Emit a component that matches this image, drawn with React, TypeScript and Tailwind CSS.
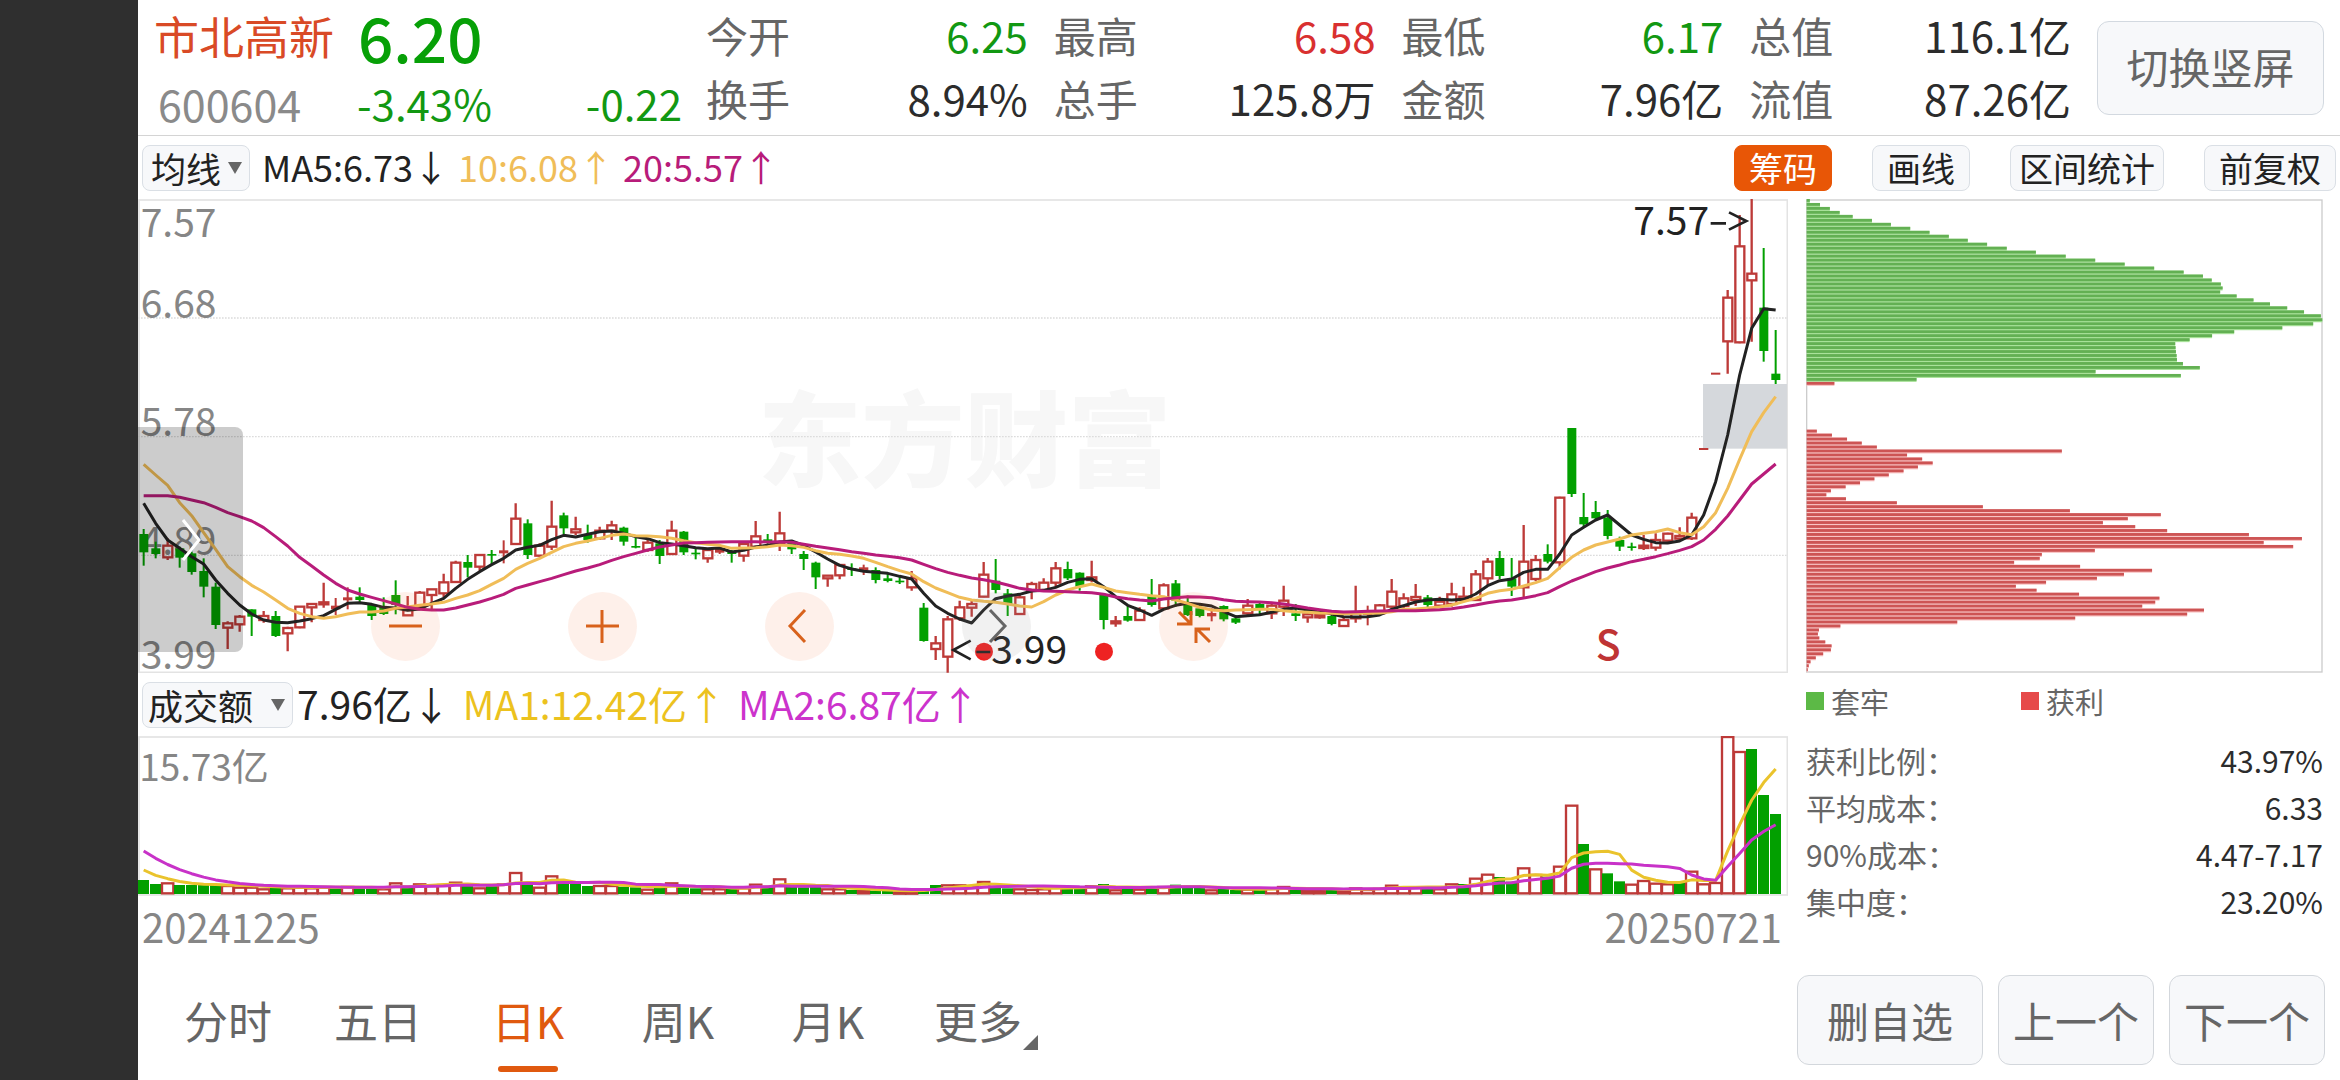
import React from 'react';
import { clsx } from 'clsx';

type Candle = [color: 'r' | 'g', high: number, top: number, bottom: number, low: number];

const STEP = 36;
const FIRST_X = 17;
const PLOT_W = 4950;
const PLOT_H = 1422;
const VOLUME_H = 480;

const UP = '#bd3a38';
const DOWN = '#02a000';

const shift = (base: number, values: number[]) => values.map((v) => v + base);
const shiftCandles = (base: number, rows: Candle[]) =>
  rows.map(([c, h, t, b, l]) => [c, h + base, t + base, b + base, l + base] as Candle);

// Candles are stored per block, each block relative to its own base line
const candles: Candle[] = [
  ...shiftCandles(603, [
    ['g', 387, 402, 457, 497], ['g', 425, 445, 462, 475], ['r', 415, 437, 472, 480], ['g', 440, 445, 473, 503],
    ['g', 455, 460, 516, 524], ['g', 475, 513, 560, 592], ['g', 548, 560, 675, 687], ['r', 664, 670, 683, 747],
    ['r', 645, 650, 673, 695], ['g', 628, 628, 650, 708], ['r', 633, 648, 660, 668], ['g', 633, 648, 708, 711],
    ['r', 680, 684, 700, 754], ['r', 618, 620, 682, 685], ['r', 610, 612, 622, 667], ['r', 548, 607, 613, 623],
    ['r', 594, 620, 625, 645], ['r', 562, 595, 598, 628], ['g', 562, 590, 600, 612], ['g', 612, 615, 648, 660],
    ['g', 592, 620, 642, 645], ['g', 541, 585, 615, 643], ['r', 588, 630, 646, 648], ['r', 573, 578, 620, 625],
    ['r', 567, 568, 585, 628], ['r', 521, 547, 580, 592], ['r', 482, 488, 546, 549], ['g', 465, 486, 503, 532],
    ['r', 463, 465, 500, 512], ['g', 450, 462, 466, 492], ['r', 421, 454, 457, 490], ['r', 310, 356, 432, 434],
    ['g', 358, 370, 465, 477], ['r', 430, 437, 467, 470], ['r', 302, 380, 440, 450], ['g', 338, 346, 385, 402],
    ['r', 350, 388, 397, 405], ['g', 374, 405, 420, 428], ['r', 380, 392, 415, 420], ['r', 362, 376, 392, 420],
    ['g', 380, 383, 425, 437], ['g', 405, 438, 440, 445], ['r', 420, 428, 450, 455], ['g', 420, 430, 468, 492],
    ['r', 362, 392, 462, 465], ['g', 393, 395, 457, 465],
  ]),
  ...shiftCandles(483, [
    ['g', 562, 578, 582, 598], ['r', 565, 570, 595, 608], ['r', 560, 570, 575, 582], ['g', 570, 575, 582, 608],
    ['r', 545, 552, 587, 605], ['r', 483, 529, 560, 562], ['g', 522, 538, 545, 552], ['r', 455, 520, 550, 573],
    ['g', 540, 543, 568, 582], ['g', 573, 582, 597, 630], ['g', 605, 608, 652, 687], ['r', 645, 647, 655, 680],
    ['r', 612, 615, 646, 658], ['g', 610, 625, 630, 648], ['r', 614, 625, 628, 645], ['g', 622, 630, 660, 670],
    ['g', 642, 655, 663, 667], ['g', 650, 662, 666, 672], ['r', 633, 655, 682, 692], ['g', 729, 743, 843, 845],
    ['r', 828, 850, 867, 900], ['r', 768, 778, 890, 938], ['r', 722, 742, 775, 782], ['r', 722, 732, 743, 770],
    ['r', 606, 644, 710, 712], ['g', 597, 662, 690, 700], ['g', 687, 700, 732, 768], ['r', 700, 712, 762, 765],
    ['r', 665, 672, 690, 718], ['r', 655, 668, 690, 693], ['r', 606, 625, 668, 680], ['g', 605, 627, 655, 660],
    ['g', 637, 638, 680, 692], ['r', 602, 652, 660, 667], ['g', 700, 705, 780, 808], ['r', 768, 784, 790, 800],
    ['g', 738, 768, 782, 785], ['r', 742, 752, 780, 783], ['g', 657, 707, 735, 740], ['r', 670, 676, 745, 750],
    ['g', 660, 670, 722, 740], ['g', 707, 733, 765, 768], ['g', 735, 745, 768, 772], ['r', 745, 762, 766, 784],
    ['g', 736, 738, 778, 784], ['g', 765, 775, 788, 792],
  ]),
  ...shiftCandles(603, [
    ['r', 597, 617, 640, 645], ['g', 608, 612, 628, 645], ['r', 612, 617, 640, 657], ['r', 557, 602, 620, 648],
    ['g', 612, 640, 648, 663], ['r', 640, 643, 652, 668], ['r', 640, 645, 652, 656], ['g', 645, 648, 672, 676],
    ['r', 652, 660, 678, 680], ['r', 557, 640, 655, 668], ['r', 617, 637, 642, 676], ['r', 612, 616, 640, 645],
    ['r', 537, 575, 620, 630], ['r', 580, 595, 618, 628], ['r', 552, 591, 600, 618], ['g', 585, 592, 615, 622],
    ['r', 590, 605, 617, 620], ['r', 548, 583, 612, 620], ['r', 560, 590, 600, 605], ['r', 510, 523, 600, 603],
    ['r', 474, 485, 535, 555], ['g', 453, 474, 528, 537], ['g', 474, 535, 560, 588], ['r', 375, 485, 562, 592],
    ['r', 465, 480, 537, 543], ['g', 433, 462, 485, 490], ['r', 290, 293, 487, 508], ['g', 84, 84, 282, 291],
    ['g', 279, 351, 373, 380], ['g', 303, 336, 355, 360], ['g', 330, 353, 408, 418], ['g', 410, 420, 440, 453],
  ]),
  ...shiftCandles(-27, [
    ['g', 1058, 1069, 1071, 1082], ['r', 1035, 1067, 1074, 1080], ['r', 1030, 1050, 1073, 1082],
    ['r', 1028, 1031, 1052, 1055], ['r', 1012, 1038, 1046, 1050], ['r', 968, 983, 1045, 1050],
    ['r', 777, 777, 777, 777], ['r', 551, 551, 551, 551], ['r', 300, 323, 454, 551], ['r', 75, 169, 457, 460],
    ['r', 27, 251, 271, 455], ['g', 174, 353, 483, 515], ['g', 420, 551, 570, 582],
  ]),
];

const ma5 = [
  ...shift(603, [
    310, 370, 420, 445, 470, 492, 540, 580, 615, 642, 660, 667, 668, 663, 656, 647, 628, 610, 608, 613, 622, 624, 631,
    627, 610, 595, 565, 538, 515, 494, 475, 450, 442, 436, 419, 406, 411, 403, 395, 393, 400, 410, 416, 428, 432, 437,
  ]),
  ...shift(483, [
    563, 566, 564, 576, 571, 561, 556, 546, 543, 556, 576, 597, 616, 627, 634, 637, 640, 649, 657, 700, 738, 760, 777,
    789, 750, 716, 708, 703, 693, 691, 682, 667, 658, 656, 680, 710, 736, 750, 766, 748, 736, 730, 733, 738, 755, 770,
  ]),
  ...shift(603, [
    647, 644, 637, 628, 624, 630, 634, 642, 650, 651, 650, 645, 628, 617, 606, 600, 598, 600, 598, 582, 557, 542, 537,
    517, 508, 508, 462, 405, 382, 360, 345, 375,
  ]),
  ...shift(-27, [1035, 1048, 1058, 1059, 1053, 1035, 975, 875, 735, 555, 415, 356, 360]),
];

const ma10 = [
  ...shift(603, [
    193, 225, 256, 308, 347, 398, 448, 500, 530, 556, 576, 600, 625, 640, 650, 655, 650, 642, 636, 636, 633, 625, 621,
    616, 612, 607, 595, 585, 572, 553, 535, 508, 490, 475, 457, 440, 430, 423, 415, 406, 402, 407, 408, 410, 415, 422,
  ]),
  ...shift(483, [
    548, 553, 556, 565, 564, 563, 560, 555, 557, 562, 572, 580, 583, 588, 595, 607, 620, 632, 642, 665, 684, 698, 712,
    720, 724, 727, 732, 738, 741, 725, 705, 690, 680, 672, 682, 693, 698, 703, 707, 710, 720, 730, 742, 750, 752, 750,
  ]),
  ...shift(603, [
    629, 628, 628, 632, 635, 637, 639, 640, 641, 640, 640, 639, 635, 628, 627, 624, 621, 615, 605, 595, 580, 572, 568,
    558, 548, 535, 503, 472, 450, 435, 426, 417,
  ]),
  ...shift(-27, [1035, 1030, 1025, 1017, 1028, 1034, 1010, 968, 895, 808, 725, 668, 620]),
];

const ma20 = [
  ...shift(603, [
    287, 287, 287, 292, 300, 308, 322, 338, 350, 363, 383, 410, 438, 472, 498, 525, 550, 570, 582, 592, 602, 612, 622,
    628, 630, 630, 624, 615, 606, 595, 583, 565, 555, 545, 535, 524, 513, 504, 494, 481, 470, 460, 450, 441, 435, 429,
  ]),
  ...shift(483, [
    548, 547, 546, 545, 545, 545, 546, 545, 547, 553, 559, 564, 569, 575, 580, 585, 589, 593, 600, 613, 626, 637, 646,
    654, 659, 666, 675, 685, 690, 693, 694, 695, 697, 698, 703, 711, 716, 720, 723, 717, 713, 710, 711, 713, 719, 724,
  ]),
  ...shift(603, [
    605, 606, 608, 612, 618, 624, 629, 634, 636, 635, 634, 633, 632, 632, 632, 631, 629, 626, 621, 615, 608, 603, 600,
    594, 587, 578, 560, 543, 529, 515, 504, 495,
  ]),
  ...shift(-27, [1115, 1108, 1100, 1091, 1081, 1070, 1050, 1018, 978, 930, 882, 852, 822]),
];

// Negative = falling day
const volumes = [
  -42, -30, 35, -27, -27, -27, -27, 27, 22, 22, 17, -20, 20, 22, 20, 22, -17, 24, -20, -17, 17, 35, -20, 32, 27, 30, 37,
  -24, 20, -24, 32, 66, -29, 22, 56, -37, -32, -24, 27, 27, -22, -20, 16, -22, 35, -22, -17, 17, 17, -17, 20, 31, -22,
  47, -22, -20, -22, 17, 17, -12, 12, -10, -9, 8, 8, -17, -27, 29, 29, 27, 39, -22, -17, 17, 15, 17, 22, -20, -18, 26,
  -30, 14, -16, 16, -24, 24, -28, -20, -18, 14, -16, -12, 16, -14, 18, 24, -16, 12, 12, -14, 12, 20, 15, 18, 28, 20, 22,
  -17, 17, 32, -30, 49, 61, -51, -37, 80, 60, -52, 85, 268, -150, 77, -62, -38, 31, 42, 34, 32, -34, 70, 32, 36, 474,
  429, -435, -297, -240,
];
const earlierVolumes = [250, 220, 180, 150, 130, 110, 85, 70, 53];

const chips = [
  9, 38, 66, 94, 131, 186, 240, 295, 350, 405, 459, 514, 570, 653, 738, 822, 906, 990, 1074, 1129, 1154, 1180, 1185,
  1178, 1225, 1273, 1320, 1369, 1417, 1465, 1469, 1443, 1355, 1218, 1155, 1091, 1050, 1051, 1052, 1054, 1055, 1072,
  1120, 823, 1066, 313, 79, 0, 0, 0, 0, 0, 0, 0, 0, 0, 0, 0, 29, 72, 115, 157, 200, 727, 286, 329, 359, 317, 276, 234,
  193, 152, 111, 69, 56, 112, 257, 502, 750, 1009, 915, 844, 936, 1027, 1260, 1411, 1302, 1386, 821, 670, 664, 591,
  779, 984, 904, 827, 682, 596, 655, 776, 1005, 993, 956, 1132, 1084, 765, 429, 96, 35, 32, 36, 53, 71, 69, 47, 26, 11,
  6, 3,
];
const FIRST_PROFIT_CHIP = 46;

const xAt = (i: number) => FIRST_X + i * STEP;
const toPoints = (ys: number[]) => ys.map((y, i) => `${xAt(i)},${y}`).join(' ');

function volumeAverage(days: number) {
  const all = [...earlierVolumes, ...volumes.map(Math.abs)];
  return volumes.map((_, i) => {
    const end = i + earlierVolumes.length + 1;
    const sum = all.slice(end - days, end).reduce((a, b) => a + b, 0);
    return 474 - sum / days;
  });
}

function CandleChart() {
  return (
    <svg viewBox={`0 0 ${PLOT_W} ${PLOT_H}`} className="block h-auto w-full" role="img" aria-label="日K线图">
      <text x="1860" y="840" fontSize="310" fontWeight="900" fill="#f7f7f7">
        东方财富
      </text>
      {[357, 713, 1069].map((y) => (
        <line key={y} x1="0" x2={PLOT_W} y1={y} y2={y} stroke="#dcdcdc" strokeWidth="4" strokeDasharray="5 4" />
      ))}
      <rect x="3" y="3" width={PLOT_W - 5} height={PLOT_H - 5} fill="none" stroke="#e3e3e3" strokeWidth="5" />
      <rect x="4695" y="555" width="252" height="194" fill="#d5d8dc" />

      <g fontSize="117" fill="#868686">
        <text x="8" y="114">7.57</text>
        <text x="8" y="357">6.68</text>
        <text x="8" y="712">5.78</text>
        <text x="8" y="1068">4.89</text>
        <text x="8" y="1410">3.99</text>
      </g>

      <circle cx="2538" cy="1358" r="27" fill="#ee2222" />
      <circle cx="2898" cy="1358" r="27" fill="#ee2222" />

      {candles.map(([c, high, top, bottom, low], i) => {
        const x = xAt(i);
        if (c === 'g') {
          return (
            <g key={i} fill={DOWN}>
              <rect x={x - 3} y={high} width="6" height={low - high} />
              <rect x={x - 13} y={top} width="27" height={Math.max(bottom - top, 5)} />
            </g>
          );
        }
        if (bottom - top < 6) {
          return (
            <g key={i} fill={UP}>
              <rect x={x - 3} y={high} width="6" height={low - high} />
              <rect x={x - 14} y={top - 3} width="28" height={bottom - top + 6} />
            </g>
          );
        }
        return (
          <g key={i} fill="none" stroke={UP} strokeWidth="7">
            <path d={`M${x} ${high}V${top}M${x} ${bottom}V${low}`} />
            <rect x={x - 13} y={top} width="27" height={bottom - top} />
          </g>
        );
      })}

      <g fill="none" strokeWidth="9" strokeLinejoin="round">
        <polyline points={toPoints(ma5)} stroke="#222222" />
        <polyline points={toPoints(ma10)} stroke="#f0bd58" />
        <polyline points={toPoints(ma20)} stroke="#b81c7a" />
      </g>

      <g fontSize="117" fill="#222222">
        <text x="4486" y="108">7.57</text>
        <path d="M4718 73h46M4773 40l52 26l-52 26" fill="none" stroke="#222222" strokeWidth="8" />
        <path d="M2498 1325l-52 28l52 28M2515 1359h42" fill="none" stroke="#222222" strokeWidth="8" />
        <text x="2560" y="1395">3.99</text>
      </g>
      <text x="4411" y="1383" textAnchor="middle" fontSize="123" fontWeight="500" fill="#bf3434">
        S
      </text>
    </svg>
  );
}

function VolumeChart() {
  return (
    <svg viewBox={`0 0 ${PLOT_W} ${VOLUME_H}`} className="block h-auto w-full" role="img" aria-label="成交额">
      <rect x="3" y="3" width={PLOT_W - 5} height={VOLUME_H - 6} fill="none" stroke="#e3e3e3" strokeWidth="5" />
      <text x="4" y="135" fontSize="111" fill="#868686">
        15.73亿
      </text>
      {volumes.map((v, i) =>
        v < 0 ? (
          <rect key={i} x={xAt(i) - 17} y={474 + v} width="33" height={-v} fill={DOWN} />
        ) : (
          <rect
            key={i}
            x={xAt(i) - 17}
            y={477 - v}
            width="34"
            height={Math.max(v - 5, 4)}
            fill="#ffffff"
            stroke={UP}
            strokeWidth="7"
          />
        )
      )}
      <g fill="none" strokeWidth="9" strokeLinejoin="round">
        <polyline points={toPoints(volumeAverage(5))} stroke="#eac32c" />
        <polyline points={toPoints(volumeAverage(10))} stroke="#c832c8" />
      </g>
    </svg>
  );
}

function ChipChart() {
  return (
    <svg viewBox="0 0 1551 1422" className="block h-auto w-full" role="img" aria-label="筹码分布">
      <rect x="2" y="3" width="1546" height="1416" fill="none" stroke="#cccccc" strokeWidth="4" />
      {chips.map((v, i) => {
        const profit = i >= FIRST_PROFIT_CHIP;
        const width = v * 1.053;
        const y = i * 11.93;
        return (
          <g key={i}>
            <rect x="2" y={y} width={width} height="11.93" fill={profit ? '#f9c4c4' : '#a9e29a'} />
            <rect x="2" y={y} width={width} height="8.5" fill={profit ? '#cd5454' : '#63b053'} />
          </g>
        );
      })}
    </svg>
  );
}

const quoteColumns = [
  [
    { label: '今开', value: '6.25', tone: 'text-[#129812]' },
    { label: '换手', value: '8.94%', tone: 'text-[#2c2c2c]' },
  ],
  [
    { label: '最高', value: '6.58', tone: 'text-[#d93030]' },
    { label: '总手', value: '125.8万', tone: 'text-[#2c2c2c]' },
  ],
  [
    { label: '最低', value: '6.17', tone: 'text-[#129812]' },
    { label: '金额', value: '7.96亿', tone: 'text-[#2c2c2c]' },
  ],
  [
    { label: '总值', value: '116.1亿', tone: 'text-[#2c2c2c]' },
    { label: '流值', value: '87.26亿', tone: 'text-[#2c2c2c]' },
  ],
];

function Header() {
  return (
    <header className="flex h-[136px] items-start border-b border-[#d4d4d4]">
      <div className="w-[568px] shrink-0 pl-4">
        <div className="flex h-[72px] items-center gap-6">
          <h1 className="text-[45px] leading-[64px] text-[#d94a26]">市北高新</h1>
          <strong className="text-[62px] leading-[72px] font-medium text-[#07a007]">6.20</strong>
        </div>
        <div className="flex h-[62px] items-center text-[42px] leading-[60px] text-[#129812]">
          <span className="w-[203px] pl-1 text-[43px] text-[#8a8a8a]">600604</span>
          <span>-3.43%</span>
          <span className="ml-auto pr-6">-0.22</span>
        </div>
      </div>

      <dl className="grid flex-1 grid-cols-4 gap-x-[26px] pt-[3px] text-[42px] leading-[63px]">
        {quoteColumns.map((column) => (
          <div key={column[0].label}>
            {column.map(({ label, value, tone }) => (
              <div key={label} className="flex justify-between">
                <dt className="text-[#666666]">{label}</dt>
                <dd className={tone}>{value}</dd>
              </div>
            ))}
          </div>
        ))}
      </dl>

      <button className="mt-[21px] mr-4 ml-[26px] h-[94px] w-[227px] shrink-0 rounded-xl border border-[#d3d9e0] bg-[#f7f8fa] pb-1 text-[42px] leading-[60px] text-[#666666]">
        切换竖屏
      </button>
    </header>
  );
}

function IndicatorSelect({ name, label, wide }: { name: string; label: string; wide?: boolean }) {
  return (
    <label className="relative block">
      <select
        aria-label={name}
        className={clsx(
          'block h-[46px] appearance-none rounded-lg border border-[#dadfe5] bg-[#f7f8fa] text-[35px] leading-[42px] text-[#222222]',
          wide ? 'w-[151px] pl-[5px]' : 'w-[108px] pl-2'
        )}
      >
        <option>{label}</option>
      </select>
      <svg
        viewBox="0 0 14 12"
        className="pointer-events-none absolute top-[17px] right-2 h-3 w-[14px] fill-[#666666]"
        aria-hidden="true"
      >
        <path d="M0 0h14L7 12z" />
      </svg>
    </label>
  );
}

function Toolbar() {
  const tools = ['筹码', '画线', '区间统计', '前复权'];
  return (
    <div className="flex h-[63px] items-center justify-between pr-1 pl-1">
      <div className="flex items-center text-[36px] leading-[46px]">
        <IndicatorSelect name="主图指标" label="均线" />
        <div className="flex gap-[9px] pb-[3px] pl-3">
          <span className="text-[#222222]">MA5:6.73↓</span>
          <span className="text-[#f0bd58]">10:6.08↑</span>
          <span className="text-[#b81c7a]">20:5.57↑</span>
        </div>
      </div>
      <div className="flex gap-10">
        {tools.map((tool, i) => (
          <button
            key={tool}
            className={clsx(
              'h-[46px] rounded-lg border text-[34px] leading-[42px]',
              tool.length > 3 ? 'px-2' : 'px-[14px]',
              i === 0 ? 'border-[#e85606] bg-[#e85606] text-white' : 'border-[#dadfe5] bg-[#f7f8fa] text-[#222222]'
            )}
          >
            {tool}
          </button>
        ))}
      </div>
    </div>
  );
}

const controls = [
  { label: '缩小', path: 'M18 34h33' },
  { label: '放大', path: 'M18 34h33M34 18v33' },
  { label: '左移', path: 'M40 18L25 34l15 16' },
  { label: '右移', path: 'M28 18l15 16l-15 16', muted: true },
  { label: '退出', path: 'M20 20l12 12M18 32h14V19M51 50l-12-12M51 37H37v14' },
];

function ChartPanel() {
  return (
    <div className="relative">
      <CandleChart />
      <button
        aria-label="展开侧栏"
        className="absolute top-[228px] left-0 flex h-[225px] w-[105px] items-center rounded-r-lg bg-black/20 pl-11"
      >
        <svg viewBox="0 0 20 44" className="h-11 w-5" fill="none" stroke="#ffffff" strokeWidth="3">
          <path d="M1 2l16 20L1 42" />
        </svg>
      </button>
      <div className="absolute bottom-3 left-[233px] flex gap-32">
        {controls.map(({ label, path, muted }) => (
          <button
            key={label}
            aria-label={label}
            className={clsx('size-[69px] rounded-full', muted ? 'bg-[#888888]/12' : 'bg-[#f87030]/10')}
          >
            <svg viewBox="0 0 69 69" fill="none" stroke={muted ? '#666666' : '#d8621c'} strokeWidth="3">
              <path d={path} />
            </svg>
          </button>
        ))}
      </div>
    </div>
  );
}

function VolumePanel() {
  return (
    <div>
      <div className="flex h-[63px] items-center pl-1 text-[39px] leading-[46px]">
        <IndicatorSelect name="副图指标" label="成交额" wide />
        <div className="flex gap-3 pb-[3px] pl-1">
          <span className="text-[#222222]">7.96亿↓</span>
          <span className="text-[#ecc21e]">MA1:12.42亿↑</span>
          <span className="text-[#cc33cc]">MA2:6.87亿↑</span>
        </div>
      </div>
      <VolumeChart />
      <div className="flex justify-between pt-[2px] pr-[6px] pl-1 text-[40px] leading-[56px] text-[#868686]">
        <time dateTime="2024-12-25">20241225</time>
        <time dateTime="2025-07-21">20250721</time>
      </div>
    </div>
  );
}

const chipStats = [
  ['获利比例：', '43.97%'],
  ['平均成本：', '6.33'],
  ['90%成本：', '4.47-7.17'],
  ['集中度：', '23.20%'],
];

function ChipPanel() {
  return (
    <aside className="w-[552px] shrink-0 pr-[17px] pl-[18px]">
      <ChipChart />
      <div className="flex pt-[6px] text-[29px] leading-[44px] text-[#666666]">
        <span className="flex w-[215px] items-center gap-[7px]">
          <i className="size-[18px] bg-[#5cb946]" />
          套牢
        </span>
        <span className="flex items-center gap-[7px]">
          <i className="size-[18px] bg-[#e64a4a]" />
          获利
        </span>
      </div>
      <dl className="pt-[14px] text-[30px] leading-[47px]">
        {chipStats.map(([label, value]) => (
          <div key={label} className="flex justify-between">
            <dt className="text-[#666666]">{label}</dt>
            <dd className="text-[#2c2c2c]">{value}</dd>
          </div>
        ))}
      </dl>
    </aside>
  );
}

function BottomBar() {
  const tabs = ['分时', '五日', '日K', '周K', '月K', '更多'];
  return (
    <footer className="flex h-[120px] items-start justify-between pr-[15px] pl-[15px]">
      <nav className="flex">
        {tabs.map((tab) => {
          const active = tab === '日K';
          return (
            <button
              key={tab}
              className={clsx(
                'relative h-[120px] w-[150px] text-[44px] leading-[120px]',
                active ? 'text-[#e0590f]' : 'text-[#666666]'
              )}
            >
              {tab}
              {active && <span className="absolute bottom-2 left-[45px] h-[6px] w-[60px] rounded-full bg-[#e0590f]" />}
              {tab === '更多' && (
                <svg viewBox="0 0 15 15" className="absolute right-[15px] bottom-[30px] size-[15px] fill-[#666666]">
                  <path d="M15 0v15H0z" />
                </svg>
              )}
            </button>
          );
        })}
      </nav>
      <div className="flex gap-[15px] pt-[15px] text-[42px] leading-[60px] text-[#666666]">
        <button className="h-[90px] w-[186px] rounded-xl border border-[#d3d7dc] bg-[#f7f8fa]">删自选</button>
        <button className="h-[90px] w-[156px] rounded-xl border border-[#d3d7dc] bg-[#f7f8fa]">上一个</button>
        <button className="h-[90px] w-[156px] rounded-xl border border-[#d3d7dc] bg-[#f7f8fa]">下一个</button>
      </div>
    </footer>
  );
}

export default function App() {
  return (
    <div className="flex min-h-screen bg-white font-['Noto_Sans_CJK_SC',sans-serif]">
      <div className="w-[138px] shrink-0 bg-[#2f2f2f]" />
      <main className="flex min-w-0 flex-1 flex-col">
        <Header />
        <Toolbar />
        <div className="flex flex-1">
          <section className="min-w-0 flex-1">
            <ChartPanel />
            <VolumePanel />
          </section>
          <ChipPanel />
        </div>
        <BottomBar />
      </main>
    </div>
  );
}
